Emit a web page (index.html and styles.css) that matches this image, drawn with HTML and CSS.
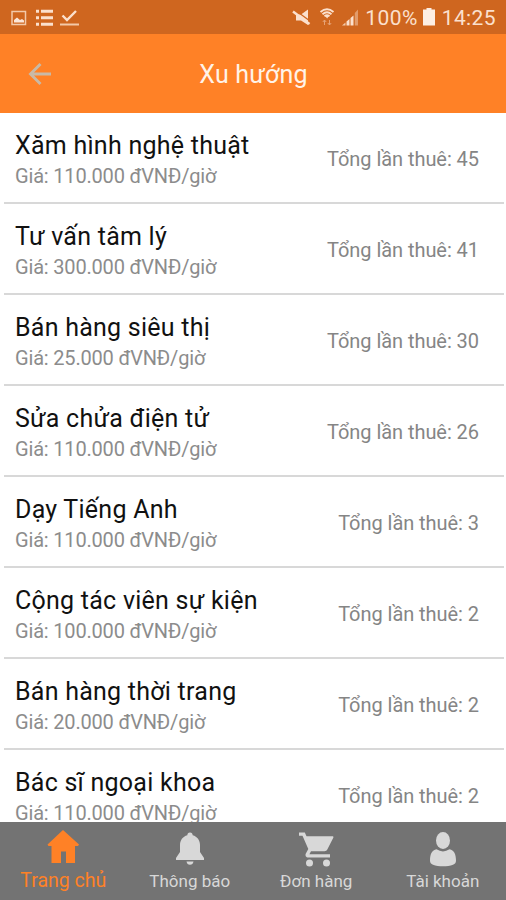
FILE: index.html
```html
<!DOCTYPE html>
<html lang="vi">
<head>
    <meta charset="UTF-8">
    <meta name="viewport" content="width=device-width, initial-scale=1.0">
    <title>Xu hướng</title>
    <link rel="stylesheet" href="styles.css">
</head>
<body>
    <div class="status-bar">
        <svg class="status-left" width="90" height="34" viewBox="0 0 90 34">
            <rect x="12" y="11.5" width="13.5" height="13" fill="none" stroke="#f3c9a9" stroke-width="1.5"/>
            <path d="M14 22.500v-2.500l3-2.500 3 2.500 2-1 2 1.500v2z" fill="#fbe6d8"/>
            <path d="M36 11.300h3M41 11.300h12M36 17.800h3M41 17.800h12M36 24.200h3M41 24.200h12" stroke="#fbe0cd" stroke-width="3"/>
            <path d="M62.500 15.500l4.500 4.500 9-9" fill="none" stroke="#fbe0cd" stroke-width="2.400"/>
            <path d="M60 24.500h19" stroke="#f3c9a9" stroke-width="2"/>
        </svg>
        <div class="status-right">
            <svg width="70" height="34" viewBox="0 0 70 34">
                <path d="M3 14.500h5l7-5v15.500l-7-4.500H3z" fill="#fbe0cd"/>
                <path d="M2 10l17 12.500" stroke="#cf661f" stroke-width="1.200"/>
                <path d="M0 11.500l16.500 12.500" stroke="#fbe0cd" stroke-width="2.400"/>
                <path d="M27.500 12q6.500-5.500 13 0M29.500 14.200q4.500-3.800 9 0M31.500 16.300q2.500-2 5 0" fill="none" stroke="#fbe0cd" stroke-width="1.900"/>
                <path d="M32.300 16h3.500l-1.700 2.500z" fill="#fbe0cd"/>
                <path d="M31.500 20v5M29.800 22l1.700-2 1.700 2M36.500 20v5M34.800 23l1.700 2 1.700-2" fill="none" stroke="#e6a276" stroke-width="1"/>
                <path d="M49 25.500l3.500-3v3z" fill="#f3c9a9"/>
                <path d="M53.500 21.500l3-2.500v6.500h-3zM57.500 18l3-2.500v10h-3z" fill="#fbe0cd"/>
                <path d="M61.800 13l3.200-3.500v16h-3.200z" fill="#e29c6c"/>
            </svg>
            <span class="battery-text">100%</span>
            <svg class="battery" width="12" height="18" viewBox="0 0 12 18">
                <path d="M3.500 0h5v1.500H12v16H0v-16h3.500z" fill="#fdeee3"/>
            </svg>
            <span class="clock">14:25</span>
        </div>
    </div>

    <header class="header">
        <svg class="back" width="24" height="24" viewBox="0 0 24 24">
            <path d="M23 12H3M12.500 2L2.500 12l10 10" fill="none" stroke="#c9b9a6" stroke-width="2.900"/>
        </svg>
        <h1>Xu hướng</h1>
    </header>

    <main class="list">
        <div class="item">
            <div class="info">
                <h2>Xăm hình nghệ thuật</h2>
                <p>Giá: 110.000 đVNĐ/giờ</p>
            </div>
            <span class="total">Tổng lần thuê: 45</span>
        </div>
        <div class="item">
            <div class="info">
                <h2>Tư vấn tâm lý</h2>
                <p>Giá: 300.000 đVNĐ/giờ</p>
            </div>
            <span class="total">Tổng lần thuê: 41</span>
        </div>
        <div class="item">
            <div class="info">
                <h2>Bán hàng siêu thị</h2>
                <p>Giá: 25.000 đVNĐ/giờ</p>
            </div>
            <span class="total">Tổng lần thuê: 30</span>
        </div>
        <div class="item">
            <div class="info">
                <h2>Sửa chửa điện tử</h2>
                <p>Giá: 110.000 đVNĐ/giờ</p>
            </div>
            <span class="total">Tổng lần thuê: 26</span>
        </div>
        <div class="item">
            <div class="info">
                <h2>Dạy Tiếng Anh</h2>
                <p>Giá: 110.000 đVNĐ/giờ</p>
            </div>
            <span class="total">Tổng lần thuê: 3</span>
        </div>
        <div class="item">
            <div class="info">
                <h2>Cộng tác viên sự kiện</h2>
                <p>Giá: 100.000 đVNĐ/giờ</p>
            </div>
            <span class="total">Tổng lần thuê: 2</span>
        </div>
        <div class="item">
            <div class="info">
                <h2>Bán hàng thời trang</h2>
                <p>Giá: 20.000 đVNĐ/giờ</p>
            </div>
            <span class="total">Tổng lần thuê: 2</span>
        </div>
        <div class="item">
            <div class="info">
                <h2>Bác sĩ ngoại khoa</h2>
                <p>Giá: 110.000 đVNĐ/giờ</p>
            </div>
            <span class="total">Tổng lần thuê: 2</span>
        </div>
    </main>

    <nav class="tabs">
        <div class="tab active">
            <svg width="36" height="40" viewBox="0 0 36 40">
                <path d="M18 8L34 22.500l-1 1.500h-3v17h-9V29.500h-5V41H6.500V24H3.500l-1-1.500z"/>
            </svg>
            <span>Trang chủ</span>
        </div>
        <div class="tab">
            <svg width="36" height="40" viewBox="0 0 36 40">
                <path d="M18 10.500c1.800 0 2.600 1.200 2.700 2.700 4.600 1.300 7.300 5 7.300 9.800v7l4 6v2H4v-2l4-6v-7c0-4.800 2.700-8.500 7.300-9.800.1-1.500.9-2.700 2.700-2.700zM14.500 39.500h7c-.3 2-1.500 3.300-3.500 3.300s-3.200-1.300-3.500-3.300z"/>
            </svg>
            <span>Thông báo</span>
        </div>
        <div class="tab">
            <svg width="36" height="40" viewBox="0 0 36 40">
                <path d="M1 10.500h5.800l1.700 3.700H34.500c.8 0 1.200.7.800 1.500l-6 11.800c-.6 1.200-1.500 1.700-2.800 1.700H13l-1.600 3.100H32v3.200H10.500c-2.600 0-3.700-2.200-2.500-4.300l2.300-4.200L4.500 13.800H1z"/>
                <circle cx="11.500" cy="41" r="3.500"/>
                <circle cx="28.500" cy="41" r="3.500"/>
            </svg>
            <span>Đơn hàng</span>
        </div>
        <div class="tab">
            <svg width="36" height="40" viewBox="0 0 36 40">
                <ellipse cx="18" cy="18.500" rx="7" ry="8.500"/>
                <path d="M11.500 27.300Q18 31.500 24.500 27.300C29 28.500 31 32 31 38.500c0 2.500-1 3.500-3 4.200-5.500 2-14.500 2-20 0-2-.7-3-1.700-3-4.200 0-6.500 2-10 6.500-11.200z"/>
            </svg>
            <span>Tài khoản</span>
        </div>
    </nav>
</body>
</html>
```
FILE: styles.css
```css
* {
    box-sizing: border-box;
}
body {
    margin: 0;
    height: 900px;
    display: flex;
    flex-direction: column;
    overflow: hidden;
    background-color: #fff;
    font-family: Roboto, sans-serif;
}
svg {
    display: block;
    flex: none;
    overflow: visible;
}
.status-bar {
    flex: none;
    display: flex;
    justify-content: space-between;
    height: 34px;
    background-color: #cf661f;
    color: #fbe0cd;
}
.status-right {
    display: flex;
    align-items: center;
    padding-right: 10px;
    font-size: 21px;
    letter-spacing: 0.4px;
    line-height: 34px;
}
.battery-text {
    margin: 2px 5px 0 2px;
}
.clock {
    margin: 2px 0 0 7px;
}
.header {
    flex: none;
    display: grid;
    grid-template-columns: 80px 1fr 80px;
    align-items: center;
    height: 79px;
    background-color: #ff8126;
}
.back {
    margin-left: 28px;
}
h1 {
    margin: 0;
    padding: 2px 0 0 1px;
    color: #fff3e8;
    font-size: 25px;
    font-weight: 400;
    letter-spacing: 0.2px;
    text-align: center;
}
.list {
    flex: 1;
    min-height: 0;
    overflow: hidden;
    padding: 0 2px 0 4px;
}
.item {
    display: flex;
    justify-content: space-between;
    height: 91px;
    padding: 17px 25px 0 11px;
    border-bottom: 2px solid #d8d8d8;
}
.info h2 {
    margin: 0;
    color: #111;
    font-size: 25px;
    font-weight: 400;
    letter-spacing: 0.25px;
    line-height: 32px;
}
.info p {
    margin: 0;
    color: #8c8c8c;
    font-size: 20px;
    letter-spacing: -0.18px;
    line-height: 29px;
}
.total {
    padding-top: 14px;
    color: #858585;
    font-size: 20px;
    letter-spacing: -0.05px;
    line-height: 30px;
}
.tabs {
    flex: none;
    display: grid;
    grid-template-columns: repeat(4, 1fr);
    height: 78px;
    background-color: #737373;
}
.tab {
    display: flex;
    flex-direction: column;
    align-items: center;
    color: #d8d8d8;
    fill: #d8d8d8;
    font-size: 17px;
    line-height: 38px;
}
.tab.active {
    color: #ff8126;
    fill: #ff8126;
    font-size: 19.5px;
}
```
